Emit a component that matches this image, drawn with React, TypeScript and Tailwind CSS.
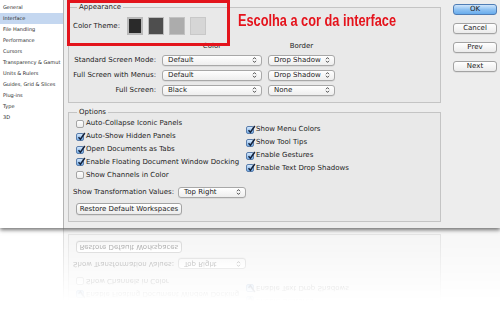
const prefs = [
  "General",
  "Interface",
  "File Handling",
  "Performance",
  "Cursors",
  "Transparency & Gamut",
  "Units & Rulers",
  "Guides, Grid & Slices",
  "Plug-ins",
  "Type",
  "3D",
];

const leftChecks = [
  { label: "Auto-Collapse Iconic Panels", checked: false },
  { label: "Auto-Show Hidden Panels", checked: true },
  { label: "Open Documents as Tabs", checked: true },
  { label: "Enable Floating Document Window Docking", checked: true },
  { label: "Show Channels in Color", checked: false },
];

const rightChecks = [
  { label: "Show Menu Colors", checked: true },
  { label: "Show Tool Tips", checked: true },
  { label: "Enable Gestures", checked: true },
  { label: "Enable Text Drop Shadows", checked: true },
];

const screenRows = [
  { label: "Standard Screen Mode:", color: "Default", border: "Drop Shadow" },
  { label: "Full Screen with Menus:", color: "Default", border: "Drop Shadow" },
  { label: "Full Screen:", color: "Black", border: "None" },
];

function Arrows() {
  return (
    <svg width="5" height="8" viewBox="0 0 5 8">
      <path
        d="M1 3.2L2.5 1.6L4 3.2M1 4.8L2.5 6.4L4 4.8"
        stroke="#3a3a3a"
        strokeWidth="0.9"
        fill="none"
      />
    </svg>
  );
}

function Select({ value, className }: { value: string; className: string }) {
  return (
    <div
      className={`flex h-[11px] items-center justify-between rounded-[3px] border border-[#a8a8a8] bg-linear-to-b from-white to-[#eeeeee] pr-[4px] pl-[5px] shadow-[0_0.5px_0.5px_rgba(0,0,0,0.12)] ${className}`}
    >
      <span className="leading-none">{value}</span>
      <Arrows />
    </div>
  );
}

type CheckboxProps = { label: string; checked: boolean; hidden?: boolean };

function Checkbox({ label, checked, hidden }: CheckboxProps) {
  return (
    <div className={hidden ? "invisible flex h-[12.8px] items-center gap-[2px]" : "flex h-[12.8px] items-center gap-[2px]"}>
      {checked ? (
        <span className="relative size-[8px] rounded-[2px] border border-[#5a7dab] bg-linear-to-b from-[#d6e8fb] to-[#74aee9]">
          <svg
            className="absolute -top-[2px] -left-[0.5px]"
            width="9"
            height="9"
            viewBox="0 0 9 9"
          >
            <path
              d="M1.5 5.2L3.4 7.2L7.8 1"
              stroke="#14223c"
              strokeWidth="1.5"
              fill="none"
            />
          </svg>
        </span>
      ) : (
        <span className="size-[8px] rounded-[2px] border border-[#a5a5a5] bg-linear-to-b from-white to-[#ececec]" />
      )}
      <span className="leading-none">{label}</span>
    </div>
  );
}

function Button({ label, primary }: { label: string; primary?: boolean }) {
  return (
    <div
      className={
        primary
          ? "flex h-[11px] items-center justify-center rounded-[3px] border border-[#4f7db5] bg-linear-to-b from-[#cfe5fb] via-[#8fc2f2] to-[#68acec] leading-none"
          : "flex h-[11px] items-center justify-center rounded-[3px] border border-[#a3a3a3] bg-linear-to-b from-white to-[#ebebeb] leading-none shadow-[0_0.5px_0.5px_rgba(0,0,0,0.12)]"
      }
    >
      {label}
    </div>
  );
}

function Sidebar({ reflection }: { reflection?: boolean }) {
  return (
    <div className="flex w-[64px] flex-col border-r border-[#b4b4b4] bg-white pt-[2px] text-[5px] text-[#2a2a2a]">
      {!reflection &&
        prefs.map((p) => (
          <div
            key={p}
            className={
              p === "Interface"
                ? "flex h-[11px] items-center bg-[#c4d7f0] pl-[3px]"
                : "flex h-[11px] items-center pl-[3px]"
            }
          >
            {p}
          </div>
        ))}
    </div>
  );
}

function Window({ reflection }: { reflection?: boolean }) {
  // the reflection only shows the lower part of the window, so the top stays empty
  return (
    <div className="relative z-10 flex h-[228px] w-[500px] shrink-0 bg-[#ededed] shadow-[0_2px_4px_rgba(0,0,0,0.55)]">
      <Sidebar reflection={reflection} />

      <div className="flex gap-[12px] pl-[4px]">
        <div className="flex w-[373px] flex-col">
          <fieldset
            className={
              reflection
                ? "invisible mt-[2.5px] border border-[#c4c4c4] bg-[#e9e9e9] pb-[6.5px]"
                : "mt-[2.5px] border border-[#c4c4c4] bg-[#e9e9e9] pb-[6.5px]"
            }
          >
            <legend className="ml-[8px] px-[2px] leading-[9px]">Appearance</legend>

            <div className="mt-[5.5px] flex h-[18px] items-center gap-[7px] pl-[4px]">
              <span>Color Theme:</span>
              <div className="flex gap-[5px]">
                <span className="h-[18px] w-[16px] border-2 border-[#b9b9b9] bg-[#2a2a2a]" />
                <span className="h-[18px] w-[16px] border border-[#bdbdbd] bg-[#4e4e4e]" />
                <span className="h-[18px] w-[16px] border border-[#c2c2c2] bg-[#acacac]" />
                <span className="h-[18px] w-[16px] border border-[#c8c8c8] bg-[#d6d6d6]" />
              </div>
            </div>

            <div className="mt-[6px] flex h-[10px] items-center pl-[93px]">
              <span className="w-[100px] text-center">Color</span>
              <span className="ml-[6px] w-[67px] text-center">Border</span>
            </div>

            <div className="mt-[3.5px] flex flex-col gap-[4px]">
              {screenRows.map((r) => (
                <div key={r.label} className="flex items-center gap-[6px]">
                  <span className="w-[87px] text-right">{r.label}</span>
                  <Select value={r.color} className="w-[100px]" />
                  <Select value={r.border} className="w-[67px]" />
                </div>
              ))}
            </div>
          </fieldset>

          <fieldset className="mt-[5px] border border-[#c4c4c4] bg-[#e9e9e9] pb-[6px]">
            <legend className={reflection ? "invisible ml-[8px] px-[2px] leading-[9px]" : "ml-[8px] px-[2px] leading-[9px]"}>
              Options
            </legend>

            <div className="flex">
              <div className="flex w-[177px] flex-col pt-[0.6px] pl-[7px]">
                {leftChecks.map((c, i) => (
                  <Checkbox key={c.label} label={c.label} checked={c.checked} hidden={reflection && i < 3} />
                ))}
              </div>
              <div className="flex flex-col pt-[6.6px]">
                {rightChecks.map((c, i) => (
                  <Checkbox key={c.label} label={c.label} checked={c.checked} hidden={reflection && i < 2} />
                ))}
              </div>
            </div>

            <div className="mt-[5px] flex items-center gap-[4px] pl-[4px]">
              <span>Show Transformation Values:</span>
              <Select value="Top Right" className="w-[68px]" />
            </div>

            <div className="mt-[5.5px] pl-[7px]">
              <div className="flex h-[12px] w-[106px] items-center justify-center rounded-[3px] border border-[#a3a3a3] bg-linear-to-b from-white to-[#ebebeb] leading-none shadow-[0_0.5px_0.5px_rgba(0,0,0,0.12)]">
                Restore Default Workspaces
              </div>
            </div>
          </fieldset>
        </div>

        <div className={reflection ? "invisible flex w-[44px] flex-col gap-[8px] pt-[4px]" : "flex w-[44px] flex-col gap-[8px] pt-[4px]"}>
          <Button label="OK" primary />
          <Button label="Cancel" />
          <Button label="Prev" />
          <Button label="Next" />
        </div>
      </div>

      {!reflection && (
        <>
          <div className="absolute top-0 left-[67px] h-[46px] w-[163px] border-[3px] border-[#e3141c]" />
          <div className="absolute top-[11px] left-[238px] origin-left scale-x-[0.75] font-['Liberation_Sans',sans-serif] text-[17px] leading-[20px] font-bold whitespace-nowrap text-[#e5131c]">
            Escolha a cor da interface
          </div>
        </>
      )}
    </div>
  );
}

export default function App() {
  return (
    <div className="flex h-[312px] w-[500px] flex-col overflow-hidden bg-white font-['DejaVu_Sans',sans-serif] text-[7px] text-[#1c1c1c]">
      <Window />
      <div className="h-[84px] overflow-hidden">
        <div className="-scale-y-100 blur-[0.4px] [mask-image:linear-gradient(to_top,rgba(0,0,0,0.5),rgba(0,0,0,0)_32%)]">
          <Window reflection />
        </div>
      </div>
    </div>
  );
}
